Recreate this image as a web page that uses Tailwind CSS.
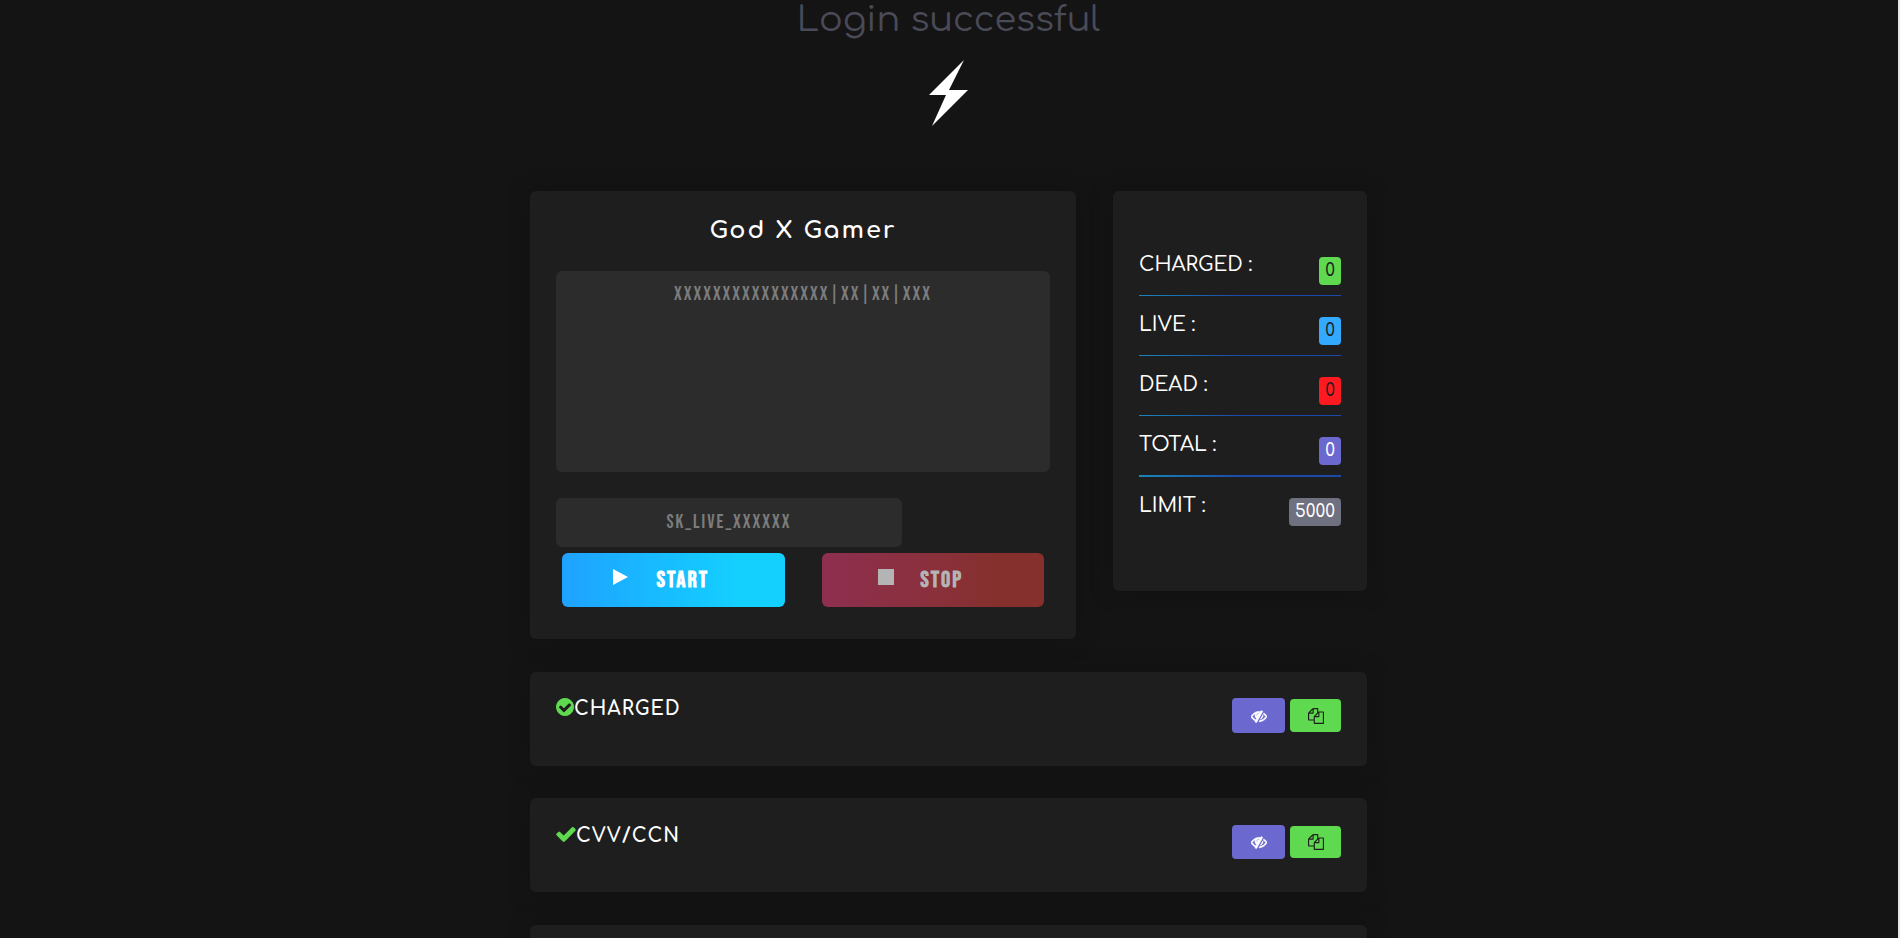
<!DOCTYPE html>
<html lang="en">
<head>
<meta charset="utf-8">
<meta name="viewport" content="width=device-width, initial-scale=1">
<title>God X Gamer</title>
<script src="https://cdn.jsdelivr.net/npm/@tailwindcss/browser@4"></script>
</head>
<body class="bg-[#141414] font-['Comfortaa','Lato',sans-serif] text-white">
<svg class="hidden" aria-hidden="true">
  <symbol id="eye-slash" viewBox="0 0 1792 1792"><path stroke-width="70" d="M555 1335l78-141q-87-63-136-159t-49-203q0-121 61-225-229 117-381 353 167 258 427 375zm389-759q0-20-14-34t-34-14q-125 0-214.500 89.500t-89.500 214.500q0 20 14 34t34 14 34-14 14-34q0-86 61-147t147-61q20 0 34-14t14-34zm363-191q0 7-1 9-106 189-316 567t-315 566l-49 89q-10 16-28 16-12 0-134-70-16-10-16-28 0-12 44-87-143-65-263.500-173t-208.500-245q-20-31-20-69t20-69q153-235 380-371t496-136q89 0 180 17l54-97q10-16 28-16 5 0 18 6t31 15.500 33 18.500 31.500 18.500 19.500 11.500q16 10 16 27zm37 447q0 139-79 253.500t-209 164.500l280-502q8 45 8 84zm448 128q0 35-20 69-39 64-109 145-150 172-347.500 267t-419.500 95l74-132q212-18 392.500-137t301.500-307q-115-179-282-294l63-112q95 64 182.500 153t144.500 186q20 34 20 69z"/></symbol>
  <symbol id="files" viewBox="0 0 1792 1792"><path d="M1696 384q40 0 68 28t28 68v1216q0 40-28 68t-68 28h-960q-40 0-68-28t-28-68v-288h-544q-40 0-68-28t-28-68v-672q0-40 20-88t48-76l408-408q28-28 76-48t88-20h416q40 0 68 28t28 68v328q68-40 128-40h416zm-544 213l-299 299h299v-299zm-640-384l-299 299h299v-299zm196 647l316-316v-416h-384v416q0 40-28 68t-68 28h-416v640h512v-256q0-40 20-88t48-76zm956 804v-1152h-384v416q0 40-28 68t-68 28h-416v640h896z"/></symbol>
</svg>
<div class="h-screen overflow-hidden border-r-2 border-[#e8e8e4] pr-px">
<main class="mx-auto flex max-w-[837px] flex-col">
  <header class="flex flex-col items-center pb-[65px]">
    <p class="text-[35px] leading-[40px] text-[#4a4a58]">Login successful</p>
    <svg class="mt-5 h-[66px] w-[39px] fill-white" viewBox="0 0 39 66" aria-hidden="true"><path d="M35 0L20 30H39L3 66L17 35H0Z"/></svg>
  </header>

  <div class="flex items-start gap-[37px]">
    <section class="min-w-0 flex-1 rounded-md bg-[#1e1e1e] px-[26px] pb-8 shadow-[0_0_20px_#111111]">
      <h1 class="pt-6 pb-6 text-center text-2xl leading-8 font-bold tracking-[2px]">God X Gamer</h1>
      <textarea aria-label="List" placeholder="XXXXXXXXXXXXXXXX|XX|XX|XXX" class="block h-[201px] w-full resize-none rounded-md bg-[#2c2c2c] px-3 py-3 text-center font-['Bebas_Neue',sans-serif] text-[19px] leading-6 tracking-[2px] outline-none placeholder:text-[#7c7c7c]"></textarea>
      <input type="text" aria-label="Key" placeholder="SK_LIVE_XXXXXX" class="mt-[26px] block h-[49px] w-[70%] rounded-md bg-[#2c2c2c] px-3 text-center font-['Bebas_Neue',sans-serif] text-[19px] tracking-[2px] outline-none placeholder:text-[#7c7c7c]">
      <div class="mt-1.5 flex gap-[37px] px-1.5">
        <button type="button" class="flex h-[54px] flex-1 items-center justify-center gap-7 rounded-md bg-linear-to-r from-[#1fa2ff] to-[#14d0ff] to-80% pr-6 font-['Bebas_Neue',sans-serif] text-[23px] font-bold tracking-[2px]">
          <svg class="mb-1.5 h-4 w-[15px] fill-white" viewBox="0 0 15 16" aria-hidden="true"><path d="M0 0L15 8L0 16Z"/></svg>START
        </button>
        <button type="button" disabled class="flex h-[54px] flex-1 items-center justify-center gap-[26px] rounded-md bg-linear-to-r from-[#8f2f50] to-[#86302d] to-80% pr-6 font-['Bebas_Neue',sans-serif] text-[23px] font-bold tracking-[2px] text-[#b4b4b4]">
          <svg class="mb-1.5 size-4 fill-[#b4b4b4]" viewBox="0 0 16 16" aria-hidden="true"><path d="M0 0H16V16H0Z"/></svg>STOP
        </button>
      </div>
    </section>

    <aside class="h-[400px] w-[254px] shrink-0 rounded-md bg-[#1e1e1e] px-[26px] pt-[45px] shadow-[0_0_20px_#111111]">
      <dl class="text-xl font-medium">
        <div class="flex h-[59px] items-start justify-between"><dt class="pt-[13px] leading-8">CHARGED :</dt><dd class="mt-[21px] rounded bg-[#5fd94f] px-1.5 text-[17px] leading-[28px] text-[#1e1e1e]">0</dd></div>
        <div class="h-px bg-linear-to-r from-[#1a86b8] to-[#1c4aa8] to-50%"></div>
        <div class="flex h-[59px] items-start justify-between"><dt class="pt-[13px] leading-8">LIVE :</dt><dd class="mt-[21px] rounded bg-[#33a9ff] px-1.5 text-[17px] leading-[28px] text-[#1e1e1e]">0</dd></div>
        <div class="h-px bg-linear-to-r from-[#1a86b8] to-[#1c4aa8] to-50%"></div>
        <div class="flex h-[59px] items-start justify-between"><dt class="pt-[13px] leading-8">DEAD :</dt><dd class="mt-[21px] rounded bg-[#ff1a22] px-1.5 text-[17px] leading-[28px] text-[#1e1e1e]">0</dd></div>
        <div class="h-px bg-linear-to-r from-[#1a86b8] to-[#1c4aa8] to-50%"></div>
        <div class="flex h-[59px] items-start justify-between"><dt class="pt-[13px] leading-8">TOTAL :</dt><dd class="mt-[21px] rounded bg-[#6b68cf] px-1.5 text-[17px] leading-[28px]">0</dd></div>
        <div class="h-0.5 bg-linear-to-r from-[#1a86b8] to-[#1c4aa8] to-50%"></div>
        <div class="flex h-[59px] items-start justify-between"><dt class="pt-[13px] leading-8">LIMIT :</dt><dd class="mt-[21px] rounded bg-[#6f7080] px-1.5 text-[17px] leading-[28px]">5000</dd></div>
      </dl>
    </aside>
  </div>

  <section class="mt-[33px] flex h-[94px] items-start justify-between rounded-md bg-[#1e1e1e] px-[26px] pt-[26px] shadow-[0_0_20px_#111111]">
    <h2 class="flex items-start text-[19px] leading-[22px] font-bold tracking-[1px]">
      <svg class="size-[18px] fill-[#5fd94f]" viewBox="128 128 1536 1536" aria-hidden="true"><path d="M1412 734q0-28-18-46l-91-90q-19-19-45-19t-45 19l-408 407-226-226q-19-19-45-19t-45 19l-91 90q-18 18-18 46 0 27 18 45l362 362q19 19 45 19 27 0 46-19l543-543q18-18 18-45zm252 162q0 209-103 385.500t-279.500 279.500-385.500 103-385.500-103-279.500-279.500-103-385.500 103-385.500 279.500-279.500 385.500-103 385.500 103 279.500 279.500 103 385.500z"/></svg>CHARGED
    </h2>
    <div class="flex items-center gap-[5px]">
      <button type="button" aria-label="Hide charged" class="flex h-[35px] w-[53px] items-center justify-center rounded bg-[#6b68cf]"><svg class="size-4 fill-white stroke-white"><use href="#eye-slash"/></svg></button>
      <button type="button" aria-label="Copy charged" class="flex h-[33px] w-[51px] items-center justify-center rounded bg-[#5fd94f]"><svg class="size-4 fill-[#1e1e1e]"><use href="#files"/></svg></button>
    </div>
  </section>

  <section class="mt-8 flex h-[94px] items-start justify-between rounded-md bg-[#1e1e1e] px-[26px] pt-[27px] shadow-[0_0_20px_#111111]">
    <h2 class="flex items-start text-[19px] leading-[22px] font-bold tracking-[1px]">
      <svg class="h-[18px] w-5 fill-[#5fd94f]" viewBox="100 240 1592 1300" aria-hidden="true"><path d="M1671 566q0 40-28 68l-724 724-136 136q-28 28-68 28t-68-28l-136-136-362-362q-28-28-28-68t28-68l136-136q28-28 68-28t68 28l294 295 656-657q28-28 68-28t68 28l136 136q28 28 28 68z"/></svg>CVV/CCN
    </h2>
    <div class="flex items-center gap-[5px]">
      <button type="button" aria-label="Hide CVV/CCN" class="flex h-[34px] w-[53px] items-center justify-center rounded bg-[#6b68cf]"><svg class="size-4 fill-white stroke-white"><use href="#eye-slash"/></svg></button>
      <button type="button" aria-label="Copy CVV/CCN" class="flex h-8 w-[51px] items-center justify-center rounded bg-[#5fd94f]"><svg class="size-4 fill-[#1e1e1e]"><use href="#files"/></svg></button>
    </div>
  </section>

  <section class="mt-[33px] h-[94px] rounded-md bg-[#1e1e1e] shadow-[0_0_20px_#111111]"></section>
</main>
</div>
</body>
</html>
